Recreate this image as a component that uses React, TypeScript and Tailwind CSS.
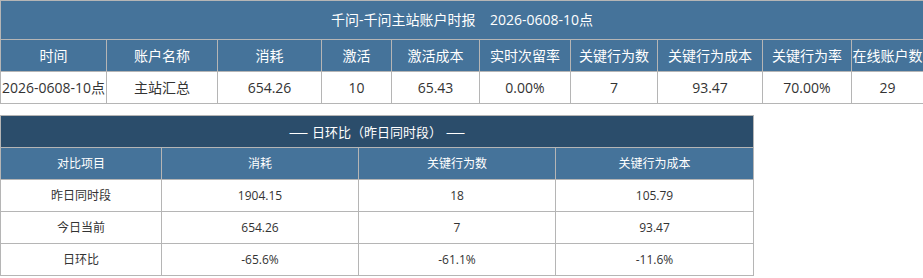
const font = { fontFamily: '"Open Sans", "Noto Sans CJK SC", sans-serif' };

const topCols = [106, 111, 104, 70, 88, 91, 87, 105, 89, 72];
const topHead = ['时间', '账户名称', '消耗', '激活', '激活成本', '实时次留率', '关键行为数', '关键行为成本', '关键行为率', '在线账户数'];
const topRow = ['2026-0608-10点', '主站汇总', '654.26', '10', '65.43', '0.00%', '7', '93.47', '70.00%', '29'];

const dayCols = [161, 197, 197, 198];
const dayHead = ['对比项目', '消耗', '关键行为数', '关键行为成本'];
const dayRows = [
  ['昨日同时段', '1904.15', '18', '105.79'],
  ['今日当前', '654.26', '7', '93.47'],
  ['日环比', '-65.6%', '-61.1%', '-11.6%'],
];

export default function App() {
  return (
    <div className="w-[923px] h-[278px] bg-white overflow-hidden" style={font}>
      <table className="table-fixed border-collapse w-[923px] text-[14px] leading-[20px]">
        <colgroup>
          {topCols.map((w, i) => (
            <col key={i} style={{ width: w }} />
          ))}
        </colgroup>
        <tbody>
          <tr>
            <td colSpan={10} className="h-[39px] bg-[#45739a] border border-[#b5b5b5] text-center text-white p-0 whitespace-pre">
              {'千问-千问主站账户时报    2026-0608-10点'}
            </td>
          </tr>
          <tr>
            {topHead.map((h) => (
              <td key={h} className="h-[32px] bg-[#45739a] border border-[#b5b5b5] text-center text-white p-0 whitespace-nowrap">
                {h}
              </td>
            ))}
          </tr>
          <tr>
            {topRow.map((v, i) => (
              <td key={i} className="h-[32px] border border-[#b5b5b5] text-center text-[#333] p-0 whitespace-nowrap">
                {v}
              </td>
            ))}
          </tr>
        </tbody>
      </table>

      <table className="mt-[11px] table-fixed border-collapse w-[753px] text-[12px] leading-[18px]">
        <colgroup>
          {dayCols.map((w, i) => (
            <col key={i} style={{ width: w }} />
          ))}
        </colgroup>
        <tbody>
          <tr>
            <td colSpan={4} className="h-[32px] bg-[#2b4d6b] border border-[#b5b5b5] text-center text-white text-[13px] p-0 whitespace-pre">
              <span className="inline-block scale-x-150 mr-[7px]">—</span>
              {'日环比（昨日同时段）'}
              <span className="inline-block scale-x-150 ml-[7px]">—</span>
            </td>
          </tr>
          <tr>
            {dayHead.map((h) => (
              <td key={h} className="h-[32px] bg-[#45739a] border border-[#b5b5b5] text-center text-white p-0">
                {h}
              </td>
            ))}
          </tr>
          {dayRows.map((r, ri) => (
            <tr key={ri}>
              {r.map((v, i) => (
                <td key={i} className="h-[32px] border border-[#b5b5b5] text-center text-[#333] p-0">
                  {v}
                </td>
              ))}
            </tr>
          ))}
        </tbody>
      </table>
    </div>
  );
}
